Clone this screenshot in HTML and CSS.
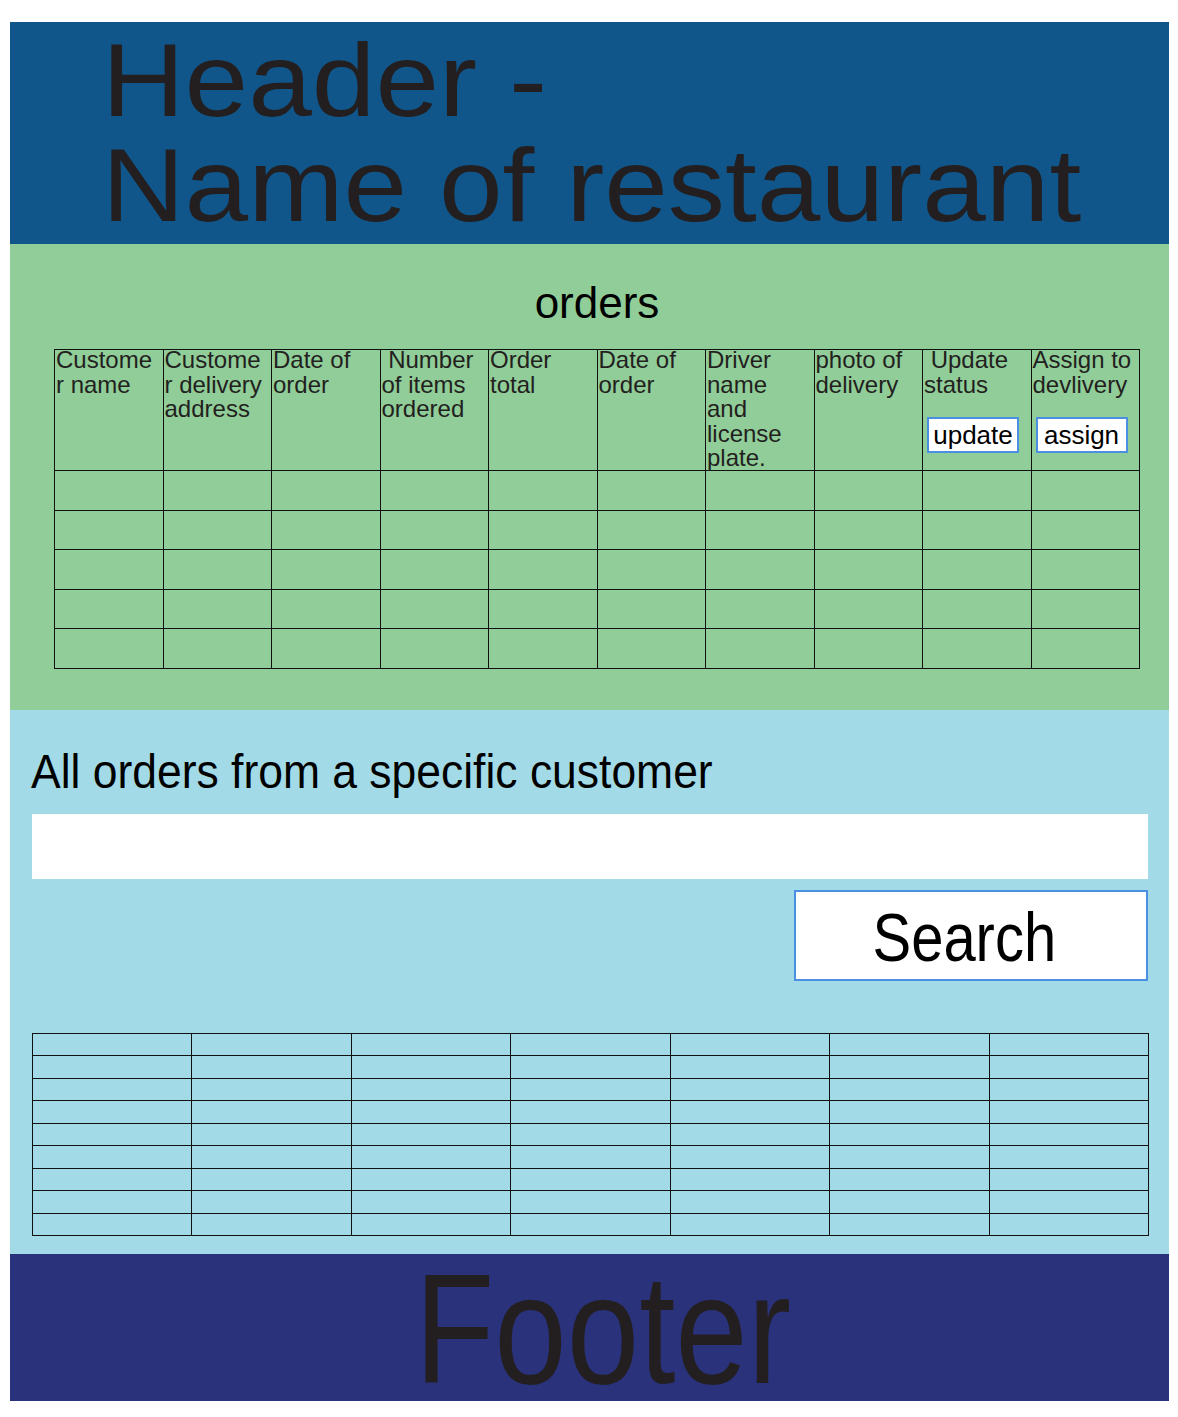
FILE: index.html
```html
<!DOCTYPE html>
<html lang="en">
<head>
<meta charset="utf-8">
<title>Restaurant orders</title>
<link rel="stylesheet" href="styles.css">
</head>
<body>
<div class="page">
  <header class="site-header">
    <h1 class="site-title">Header -<br>Name of restaurant</h1>
  </header>

  <section class="orders">
    <h2 class="orders-title">orders</h2>
    <div class="orders-grid">
      <div class="hcell"><span class="hlabel">Custome<br>r name</span></div>
      <div class="hcell"><span class="hlabel">Custome<br>r delivery<br>address</span></div>
      <div class="hcell"><span class="hlabel">Date of<br>order</span></div>
      <div class="hcell"><span class="hlabel">&nbsp;Number<br>of items<br>ordered</span></div>
      <div class="hcell"><span class="hlabel">Order<br>total</span></div>
      <div class="hcell"><span class="hlabel">Date of<br>order</span></div>
      <div class="hcell"><span class="hlabel">Driver<br>name<br>and<br>license<br>plate.</span></div>
      <div class="hcell"><span class="hlabel">photo of<br>delivery</span></div>
      <div class="hcell"><span class="hlabel">&nbsp;Update<br>status</span><button class="mini-btn" type="button">update</button></div>
      <div class="hcell"><span class="hlabel">Assign to<br>devlivery</span><button class="mini-btn" type="button">assign</button></div>

      <div class="cell"></div><div class="cell"></div><div class="cell"></div><div class="cell"></div><div class="cell"></div>
      <div class="cell"></div><div class="cell"></div><div class="cell"></div><div class="cell"></div><div class="cell"></div>
      <div class="cell"></div><div class="cell"></div><div class="cell"></div><div class="cell"></div><div class="cell"></div>
      <div class="cell"></div><div class="cell"></div><div class="cell"></div><div class="cell"></div><div class="cell"></div>
      <div class="cell"></div><div class="cell"></div><div class="cell"></div><div class="cell"></div><div class="cell"></div>
      <div class="cell"></div><div class="cell"></div><div class="cell"></div><div class="cell"></div><div class="cell"></div>
      <div class="cell"></div><div class="cell"></div><div class="cell"></div><div class="cell"></div><div class="cell"></div>
      <div class="cell"></div><div class="cell"></div><div class="cell"></div><div class="cell"></div><div class="cell"></div>
      <div class="cell"></div><div class="cell"></div><div class="cell"></div><div class="cell"></div><div class="cell"></div>
      <div class="cell"></div><div class="cell"></div><div class="cell"></div><div class="cell"></div><div class="cell"></div>
    </div>
  </section>

  <section class="customer">
    <h2 class="customer-title"><span class="narrow">All orders from a specific customer</span></h2>
    <input class="customer-input" type="text" aria-label="Customer name">
    <button class="search-btn" type="button"><span class="narrow search-label">Search</span></button>
    <div class="results-grid">
      <div class="cell"></div><div class="cell"></div><div class="cell"></div><div class="cell"></div><div class="cell"></div><div class="cell"></div><div class="cell"></div>
      <div class="cell"></div><div class="cell"></div><div class="cell"></div><div class="cell"></div><div class="cell"></div><div class="cell"></div><div class="cell"></div>
      <div class="cell"></div><div class="cell"></div><div class="cell"></div><div class="cell"></div><div class="cell"></div><div class="cell"></div><div class="cell"></div>
      <div class="cell"></div><div class="cell"></div><div class="cell"></div><div class="cell"></div><div class="cell"></div><div class="cell"></div><div class="cell"></div>
      <div class="cell"></div><div class="cell"></div><div class="cell"></div><div class="cell"></div><div class="cell"></div><div class="cell"></div><div class="cell"></div>
      <div class="cell"></div><div class="cell"></div><div class="cell"></div><div class="cell"></div><div class="cell"></div><div class="cell"></div><div class="cell"></div>
      <div class="cell"></div><div class="cell"></div><div class="cell"></div><div class="cell"></div><div class="cell"></div><div class="cell"></div><div class="cell"></div>
      <div class="cell"></div><div class="cell"></div><div class="cell"></div><div class="cell"></div><div class="cell"></div><div class="cell"></div><div class="cell"></div>
      <div class="cell"></div><div class="cell"></div><div class="cell"></div><div class="cell"></div><div class="cell"></div><div class="cell"></div><div class="cell"></div>
    </div>
  </section>

  <footer class="site-footer">
    <span class="narrow footer-label">Footer</span>
  </footer>
</div>
</body>
</html>
```

FILE: styles.css
```css
* {
  box-sizing: border-box;
}

html, body {
  background: #ffffff;
}

body {
  margin: 22px 9px 16px 10px;
  font-family: "Liberation Sans", Arial, sans-serif;
  color: #231f20;
}

.page {
  display: flex;
  flex-direction: column;
}

.narrow {
  display: inline-block;
  white-space: nowrap;
}

/* Header */
.site-header {
  height: 222px;
  background: #10568a;
  padding: 6px 0 0 92px;
}

.site-title {
  display: inline-block;
  margin: 0;
  font-weight: normal;
  font-size: 104px;
  line-height: 105px;
  color: #231f20;
  white-space: nowrap;
  transform: scaleX(1.1);
  transform-origin: left top;
}

/* Orders */
.orders {
  background: #90cd98;
  padding: 34px 29px 41px 44px;
  display: flex;
  flex-direction: column;
}

.orders-title {
  margin: 0;
  font-weight: normal;
  font-size: 44px;
  line-height: 50px;
  text-align: center;
  color: #000;
}

.orders-grid {
  margin-top: 21px;
  display: grid;
  grid-template-columns: repeat(10, 1fr);
  grid-template-rows: 121px 40px 39px 40px 39px 40px;
  border-top: 1px solid #111;
  border-left: 1px solid #111;
}

.cell,
.hcell {
  border-right: 1px solid #111;
  border-bottom: 1px solid #111;
  min-width: 0;
}

.hcell {
  padding: 0 0 0 1px;
  font-size: 24px;
  line-height: 24.5px;
  white-space: nowrap;
  color: #231f20;
  display: flex;
  flex-direction: column;
  align-items: flex-start;
}

.hlabel {
  display: block;
  margin-top: -2px;
}

.mini-btn {
  margin: 20px 0 0 3px;
  width: 92px;
  height: 36px;
  padding: 0;
  background: #ffffff;
  border: 2px solid #4a8fe2;
  border-radius: 0;
  font-family: "Liberation Sans", Arial, sans-serif;
  font-size: 26px;
  line-height: 32px;
  color: #000;
  text-align: center;
}

/* Customer search */
.customer {
  background: #a2dbe7;
  padding: 33px 20px 18px 22px;
  display: flex;
  flex-direction: column;
}

.customer-title {
  margin: 0 0 0 -1px;
  font-weight: normal;
  font-size: 49px;
  line-height: 56px;
  color: #000;
}

.customer-title .narrow {
  transform: scaleX(0.907);
  transform-origin: left center;
}

.customer-input {
  margin: 15px 1px 0 0;
  height: 65px;
  border: none;
  background: #ffffff;
  font-family: "Liberation Sans", Arial, sans-serif;
  font-size: 30px;
  padding: 0 10px;
  outline: none;
}

.search-btn {
  align-self: flex-end;
  margin: 11px 1px 0 0;
  width: 354px;
  height: 91px;
  background: #ffffff;
  border: 2px solid #4a8fe2;
  border-radius: 0;
  padding: 3px 14px 0 0;
  display: flex;
  align-items: center;
  justify-content: center;
  font-family: "Liberation Sans", Arial, sans-serif;
  font-size: 69px;
  line-height: 1;
  color: #000;
}

.search-label {
  transform: scaleX(0.84);
}

.results-grid {
  margin-top: 52px;
  display: grid;
  grid-template-columns: repeat(7, 1fr);
  grid-template-rows: repeat(9, 22.444px);
  border-top: 1px solid #111;
  border-left: 1px solid #111;
}

/* Footer */
.site-footer {
  height: 147px;
  background: #2a327b;
  padding: 0 0 0 26px;
  text-align: center;
}

.footer-label {
  font-size: 155px;
  line-height: 147px;
  padding-top: 2px;
  color: #231f20;
  transform: scaleX(0.84);
}
```
